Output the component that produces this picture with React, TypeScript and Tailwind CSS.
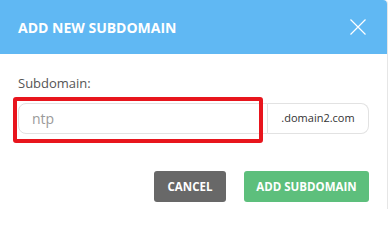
import React from "react";

export default function App() {
  return (
    <div className="relative w-[391px] h-[209px] bg-white overflow-hidden" style={{ fontFamily: '"Open Sans", "Liberation Sans", sans-serif' }}>
      <div className="w-[388px] h-[209px] border-r border-[#e6e6e6] rounded-tr-[4px]">
        <div className="h-[54px] bg-[#60b8f3] rounded-tr-[4px] flex items-center justify-between pl-[18px] pr-[20px]">
          <span className="text-white font-bold text-[14px]">ADD NEW SUBDOMAIN</span>
          <svg width="18" height="18" viewBox="0 0 18 18" className="text-white">
            <path d="M1.5 1.5L16.5 16.5M16.5 1.5L1.5 16.5" stroke="currentColor" strokeWidth="1.2" fill="none" />
          </svg>
        </div>
        <div className="pl-[18px] pr-[18px] pt-[20px]">
          <div className="text-[13px] leading-[18px] text-[#555]">Subdomain:</div>
          <div className="mt-[11px] flex h-[31px] w-[351px]">
            <div className="w-[250px] h-full border border-[#e2e2e2] rounded-l-[8px] flex items-center pl-[13px] text-[14px] text-[#9a9a9a]">ntp</div>
            <div className="flex-1 h-full border border-l-0 border-[#e2e2e2] rounded-r-[8px] flex items-center justify-center text-[11px] text-[#333]">.domain2.com</div>
          </div>
          <div className="mt-[37px] flex justify-end gap-[18px]">
            <button className="w-[72px] h-[31px] rounded-[3px] bg-[#686868] text-white font-bold text-[11.5px]">CANCEL</button>
            <button className="w-[125px] h-[31px] rounded-[3px] bg-[#5dbf7c] text-white font-bold text-[11.5px]">ADD SUBDOMAIN</button>
          </div>
        </div>
      </div>
      <div className="absolute left-[13px] top-[97px] w-[250px] h-[46px] border-[4px] border-[#e8151d] rounded-[3px]" />
    </div>
  );
}
